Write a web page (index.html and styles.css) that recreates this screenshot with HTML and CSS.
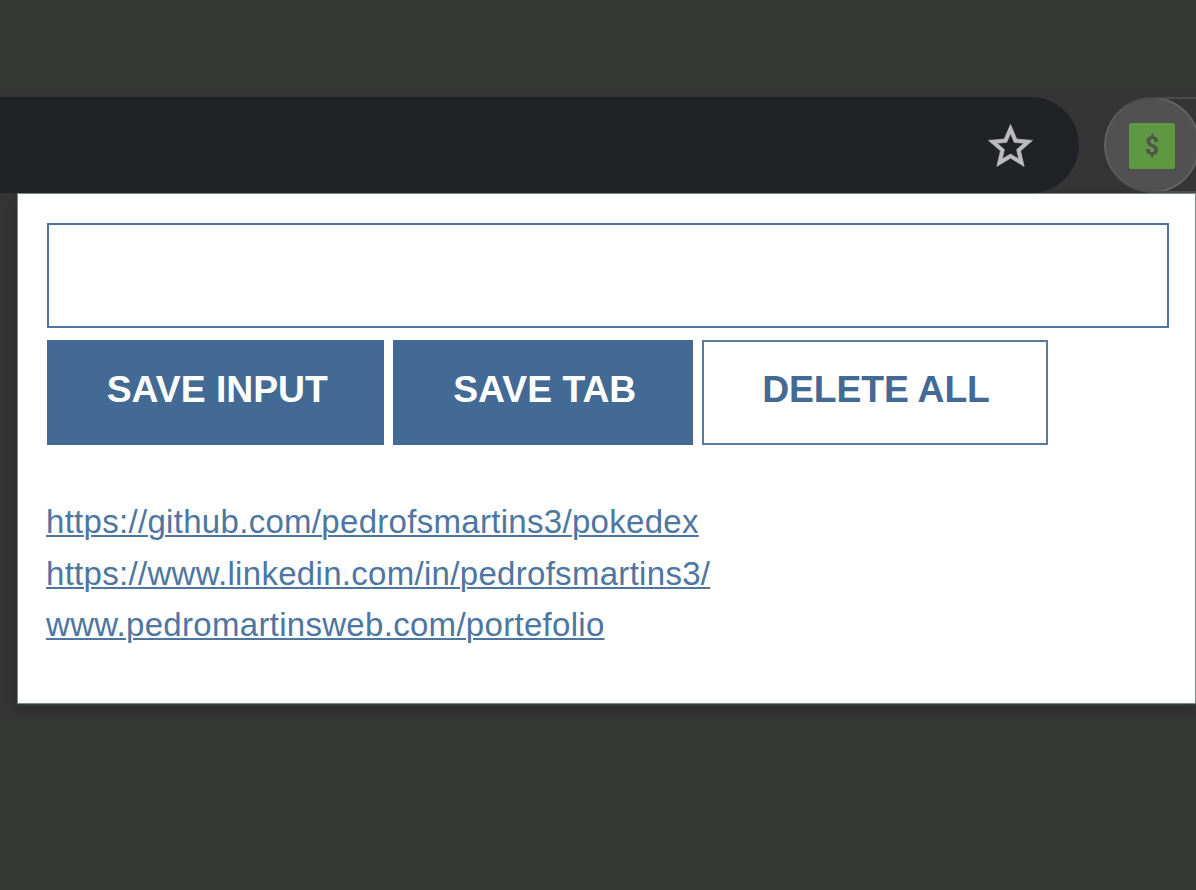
FILE: index.html
```html
<!DOCTYPE html>
<html lang="en">
<head>
<meta charset="utf-8">
<title>Lead Tracker</title>
<link rel="stylesheet" href="styles.css">
</head>
<body>
<header class="toolbar">
  <div class="address-bar">
    <svg class="star" viewBox="0 0 24 24" aria-hidden="true"><path d="M22 9.24l-7.19-.62L12 2 9.19 8.63 2 9.24l5.46 4.73L5.82 21 12 17.27 18.18 21l-1.63-7.03L22 9.24zM12 15.4l-3.76 2.27 1-4.28-3.32-2.88 4.38-.38L12 6.1l1.71 4.04 4.38.38-3.32 2.88 1 4.28L12 15.4z"/></svg>
  </div>
  <div class="extensions">
    <div class="extension-button"><span class="extension-icon">$</span></div>
  </div>
</header>
<main class="popup">
  <input class="entry" type="text" aria-label="Lead">
  <div class="actions">
    <button class="btn btn-input">SAVE INPUT</button>
    <button class="btn btn-tab">SAVE TAB</button>
    <button class="btn btn-delete">DELETE ALL</button>
  </div>
  <ul class="links">
    <li><a href="#">https://github.com/pedrofsmartins3/pokedex</a></li>
    <li><a href="#">https://www.linkedin.com/in/pedrofsmartins3/</a></li>
    <li><a href="#">www.pedromartinsweb.com/portefolio</a></li>
  </ul>
</main>
</body>
</html>
```

FILE: styles.css
```css
* { box-sizing: border-box; }

body {
  margin: 0;
  height: 890px;
  padding-top: 97px;
  overflow: hidden;
  background: linear-gradient(#363836 0 89px, #353535 89px 721px, #363836 721px);
  font-family: "Liberation Sans", Arial, sans-serif;
}

.toolbar {
  display: flex;
  gap: 25px;
  height: 97px;
  overflow: hidden;
  background: #353535;
}

.address-bar {
  display: flex;
  flex: none;
  align-items: center;
  justify-content: flex-end;
  width: 1079px;
  height: 96px;
  padding: 2px 42px 0 0;
  border-radius: 0 48px 48px 0;
  background: #212226;
}

.star {
  width: 53px;
  height: 53px;
  fill: #bcbcbc;
  stroke: #bcbcbc;
  stroke-width: .3;
}

.extensions {
  flex: 1;
  height: 96px;
  overflow: hidden;
  border: solid #4c4c4c;
  border-width: 2px 0;
  border-radius: 48px 0 0 48px;
  background: #353535;
}

.extension-button {
  display: flex;
  align-items: center;
  justify-content: center;
  width: 96px;
  height: 96px;
  margin-top: -2px;
  padding-top: 2px;
  border: 2px solid #636363;
  border-radius: 50%;
  background: #515151;
}

.extension-icon {
  width: 46px;
  height: 46px;
  border-radius: 2px;
  background: #5f9842;
  color: #4b5548;
  font: bold 25px/48px Roboto, sans-serif;
  text-align: center;
}

.popup {
  width: 1177px;
  height: 509px;
  margin-left: 18px;
  padding: 29px 26px 0 29px;
  background: #fff;
  box-shadow: 0 0 0 1px #7d8484, 0 3px 1px #303b3a, 0 5px 14px rgba(0, 0, 0, .25);
}

.entry {
  display: block;
  width: 100%;
  height: 105px;
  margin: 0;
  padding: 20px;
  border: 2px solid #4d759d;
  border-radius: 0;
  outline: none;
  font-size: 37px;
}

.actions {
  display: flex;
  gap: 9px;
  margin-top: 12px;
}

.btn {
  height: 105px;
  margin: 0;
  padding: 0 0 6px 4px;
  border: 2px solid #436a94;
  background: #436a94;
  color: #fff;
  font: bold 37.3px "Liberation Sans", Arial, sans-serif;
  white-space: nowrap;
}

.btn-input { width: 336.5px; }
.btn-tab { width: 300.5px; }

.btn-delete {
  width: 346px;
  padding-left: 2px;
  border-color: #557da4;
  background: #fff;
  color: #436a94;
  letter-spacing: -.1px;
}

.links {
  margin: 51px 0 0 -1px;
  padding: 0;
  list-style: none;
  font-size: 33px;
  line-height: 51.7px;
  letter-spacing: .3px;
}

.links a {
  color: #4d76a1;
  text-decoration-thickness: 2px;
  text-underline-offset: 2px;
}
```
